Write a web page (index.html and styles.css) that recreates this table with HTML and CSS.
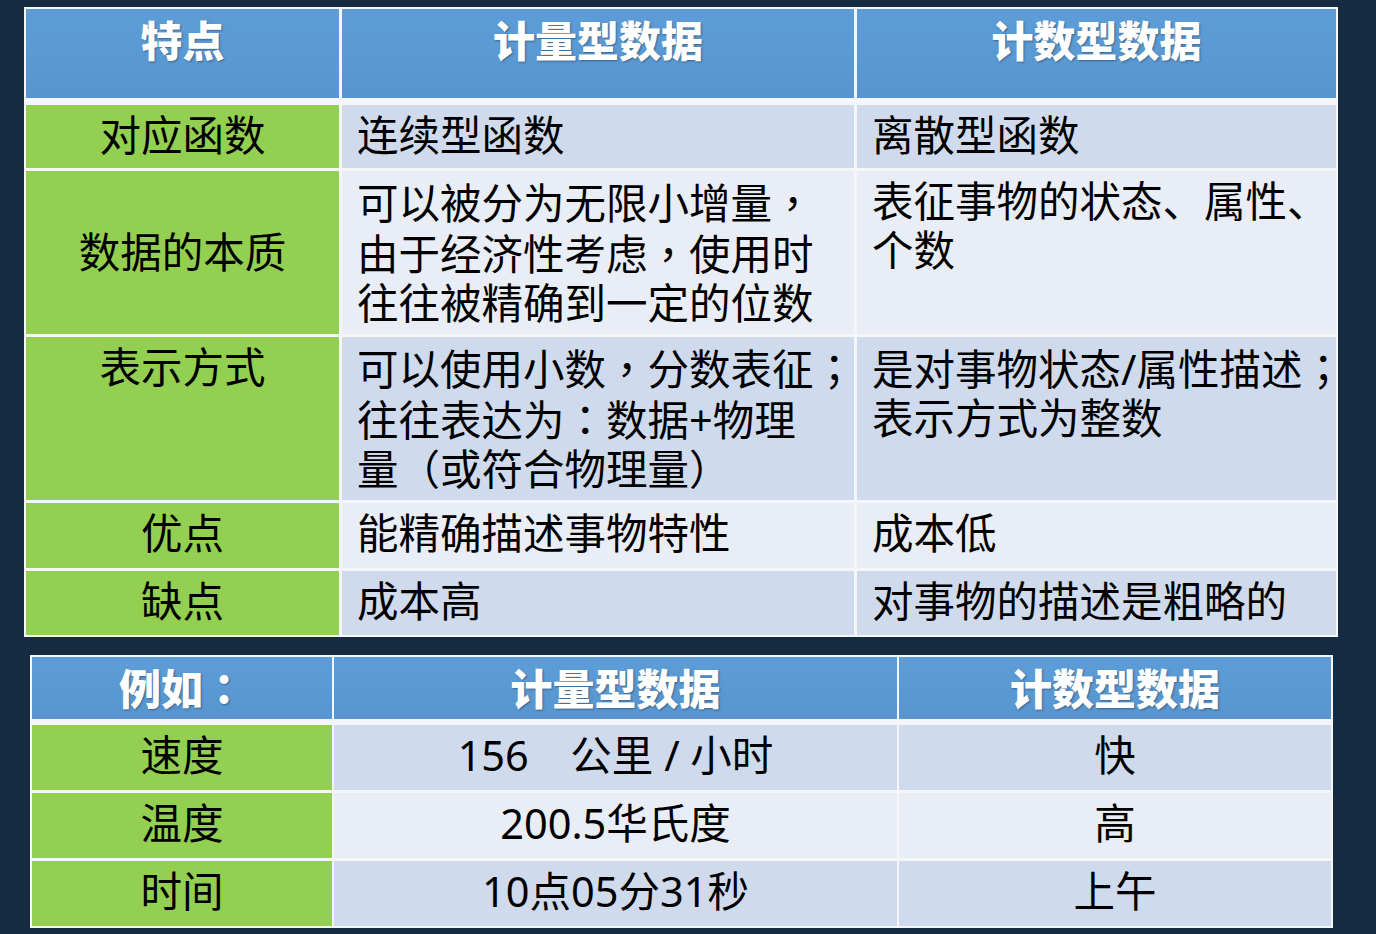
FILE: index.html
```html
<!DOCTYPE html>
<html lang="zh-CN">
<head>
<meta charset="utf-8">
<title>计量型数据与计数型数据</title>
<link rel="stylesheet" href="styles.css">
</head>
<body>
<div class="page">
  <div class="t1">
    <div class="hd">特点</div>
    <div class="hd">计量型数据</div>
    <div class="hd">计数型数据</div>

    <div class="lbl">对应函数</div>
    <div class="txt b1">连续型函数</div>
    <div class="txt b1">离散型函数</div>

    <div class="lbl mid">数据的本质</div>
    <div class="txt b2">可以被分为无限小增量<span class="p" lang="zh-TW">，</span><br>由于经济性考虑<span class="p" lang="zh-TW">，</span>使用时<br>往往被精确到一定的位数</div>
    <div class="txt b2">表征事物的状态、属性、<br>个数</div>

    <div class="lbl">表示方式</div>
    <div class="txt b1">可以使用小数<span class="p" lang="zh-TW">，</span>分数表征<span class="p" lang="zh-TW">；</span><br>往往表达为<span class="p" lang="zh-TW">：</span>数据+物理<br>量（或符合物理量）</div>
    <div class="txt b1">是对事物状态/属性描述<span class="p" lang="zh-TW">；</span><br>表示方式为整数</div>

    <div class="lbl">优点</div>
    <div class="txt b2">能精确描述事物特性</div>
    <div class="txt b2">成本低</div>

    <div class="lbl">缺点</div>
    <div class="txt b1">成本高</div>
    <div class="txt b1">对事物的描述是粗略的</div>
  </div>

  <div class="t2">
    <div class="hd2">例如<span class="p" lang="zh-TW">：</span></div>
    <div class="hd2">计量型数据</div>
    <div class="hd2">计数型数据</div>

    <div class="lbl2">速度</div>
    <div class="val b1">156　公里 / 小时</div>
    <div class="val b1">快</div>

    <div class="lbl2">温度</div>
    <div class="val b2">200.5华氏度</div>
    <div class="val b2">高</div>

    <div class="lbl2">时间</div>
    <div class="val b1">10点05分31秒</div>
    <div class="val b1">上午</div>
  </div>
</div>
</body>
</html>
```
FILE: styles.css
```css
html, body {
  margin: 0;
  padding: 0;
  background: #142b41;
}
body {
  width: 1376px;
  height: 934px;
  overflow: hidden;
  font-family: "Noto Sans", "Noto Sans CJK SC", sans-serif;
  color: #000;
}
.page {
  padding-top: 7px;
}
.p {
  font-family: "Noto Sans CJK TC", "Noto Sans CJK SC", sans-serif;
}
.t1 {
  margin-left: 24px;
  width: 1314px;
  box-sizing: border-box;
  display: grid;
  grid-template-columns: 313px 512px 479px;
  grid-template-rows: 93px 63px 163px 163px 65px 64px;
  gap: 3px;
  padding: 2px;
  background: #f4f6f9;
}
.t2 {
  margin-top: 18px;
  margin-left: 30px;
  width: 1303px;
  box-sizing: border-box;
  display: grid;
  grid-template-columns: 300px 563px 432px;
  grid-template-rows: 65px 65px 65px 65px;
  column-gap: 2px;
  row-gap: 3px;
  padding: 2px;
  background: #f4f6f9;
}
.hd, .hd2 {
  background: linear-gradient(#5d9dd7, #5895d0);
  color: #fff;
  font-weight: 900;
  font-size: 42px;
  text-align: center;
  text-shadow: 1px 1px 2px rgba(0, 0, 0, 0.35);
  white-space: nowrap;
  font-family: "Noto Sans CJK SC", sans-serif;
}
.hd2 .p {
  font-weight: 900;
}
.hd {
  margin-bottom: 4px;
  line-height: 49px;
  padding-top: 5px;
}
.hd2 {
  margin-bottom: 3px;
  display: flex;
  align-items: center;
  justify-content: center;
  padding-bottom: 3px;
}
.lbl, .lbl2 {
  background: #93cf50;
  font-size: 41.5px;
  line-height: 49px;
  text-align: center;
  white-space: nowrap;
}
.lbl {
  padding-top: 6px;
}
.lbl.mid {
  padding-top: 0;
  display: flex;
  align-items: center;
  justify-content: center;
}
.lbl2 {
  display: flex;
  align-items: center;
  justify-content: center;
  padding-bottom: 4px;
}
.txt {
  font-size: 41.5px;
  line-height: 49px;
  padding: 6px 0 0 15px;
  white-space: nowrap;
}
.val {
  font-size: 41.5px;
  line-height: 49px;
  display: flex;
  align-items: center;
  justify-content: center;
  white-space: pre;
  padding-bottom: 4px;
}
.b1 {
  background: #cfdbed;
}
.b2 {
  background: #e9edf5;
}
```
